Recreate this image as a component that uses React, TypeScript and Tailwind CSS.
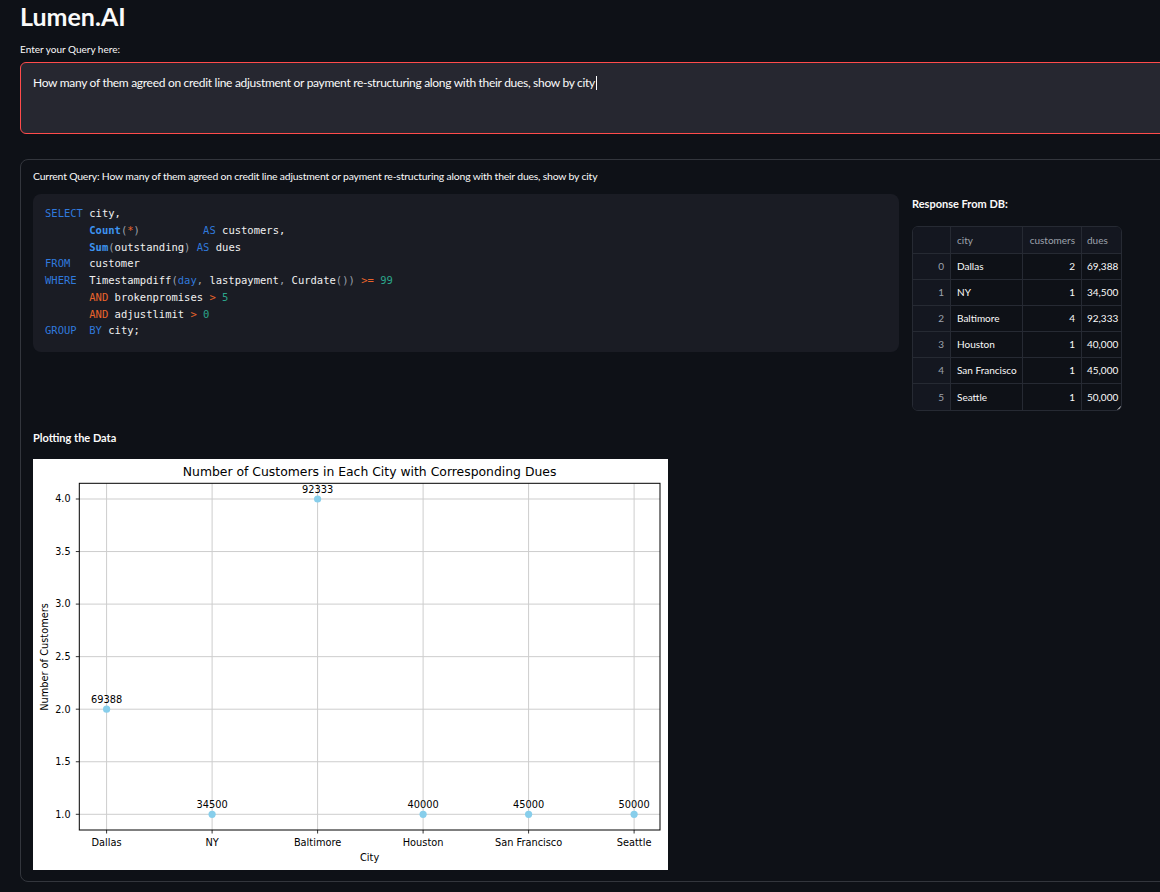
import type { ReactNode } from 'react';

const QUERY =
  'How many of them agreed on credit line adjustment or payment re-structuring along with their dues, show by city';

const ROWS = [
  { city: 'Dallas', customers: 2, dues: 69388 },
  { city: 'NY', customers: 1, dues: 34500 },
  { city: 'Baltimore', customers: 4, dues: 92333 },
  { city: 'Houston', customers: 1, dues: 40000 },
  { city: 'San Francisco', customers: 1, dues: 45000 },
  { city: 'Seattle', customers: 1, dues: 50000 },
];

const UI_FONT = { fontFamily: 'Lato, "Noto Sans", sans-serif' };
const MONO_FONT = { fontFamily: '"DejaVu Sans Mono", "Liberation Mono", monospace' };

// tiny token helpers for the sql block
const K = ({ children }: { children: ReactNode }) => <span className="text-[#3079dc]">{children}</span>;
const F = ({ children }: { children: ReactNode }) => (
  <span className="font-bold text-[#3d93f0]">{children}</span>
);
const O = ({ children }: { children: ReactNode }) => <span className="text-[#e8632b]">{children}</span>;
const N = ({ children }: { children: ReactNode }) => <span className="text-[#2ba58b]">{children}</span>;
const P = ({ children }: { children: ReactNode }) => <span className="text-[#9aa1ab]">{children}</span>;

function SqlBlock() {
  return (
    <pre
      className="rounded-lg bg-[#1a1c24] pl-3 pt-[11px] pb-[13px] text-[10.5px] leading-[16.75px] text-[#f0f0f0]"
      style={MONO_FONT}
    >
      <K>SELECT</K> city,{'\n'}
      {'       '}
      <F>Count</F>
      <P>(</P>
      <O>*</O>
      <P>)</P>
      {'          '}
      <K>AS</K> customers,{'\n'}
      {'       '}
      <F>Sum</F>
      <P>(</P>outstanding<P>)</P> <K>AS</K> dues{'\n'}
      <K>FROM</K>
      {'   '}customer{'\n'}
      <K>WHERE</K>
      {'  '}Timestampdiff<P>(</P>
      <K>day</K>
      <P>,</P> lastpayment<P>,</P> Curdate<P>())</P> <O>&gt;=</O> <N>99</N>
      {'\n'}
      {'       '}
      <O>AND</O> brokenpromises <O>&gt;</O> <N>5</N>
      {'\n'}
      {'       '}
      <O>AND</O> adjustlimit <O>&gt;</O> <N>0</N>
      {'\n'}
      <K>GROUP</K>
      {'  '}
      <K>BY</K> city;
    </pre>
  );
}

function ResultTable() {
  return (
    <div className="relative w-[210px] overflow-hidden rounded-md border border-[#262a33] text-[10px]">
      <div className="flex h-[27px] items-center border-b border-[#262a33] bg-[#141720] text-[#9ea3ad]">
        <div className="h-full w-[38px] border-r border-[#262a33]" />
        <div className="flex h-full w-[72px] items-center border-r border-[#262a33] pl-[6px]">city</div>
        <div className="flex h-full w-[59px] items-center justify-end border-r border-[#262a33] pr-[6px]">
          customers
        </div>
        <div className="flex h-full flex-1 items-center pl-[5px]">dues</div>
      </div>
      {ROWS.map((r, i) => (
        <div
          key={r.city}
          className={`flex h-[26px] items-center ${i < ROWS.length - 1 ? 'border-b border-[#262a33]' : ''}`}
        >
          <div className="flex h-full w-[38px] items-center justify-end border-r border-[#262a33] bg-[#141720] pr-[6px] text-[#9ea3ad]">
            {i}
          </div>
          <div className="flex h-full w-[72px] items-center border-r border-[#262a33] pl-[6px] text-[#fafafa]">
            {r.city}
          </div>
          <div className="flex h-full w-[59px] items-center justify-end border-r border-[#262a33] pr-[6px] text-[#fafafa]">
            {r.customers}
          </div>
          <div className="flex h-full flex-1 items-center whitespace-nowrap pl-[5px] text-[#fafafa]">
            {r.dues.toLocaleString('en-US')}
          </div>
        </div>
      ))}
      {/* resize grip */}
      <span className="absolute right-0 bottom-0 h-0 w-0 border-b-[4px] border-l-[4px] border-b-white border-l-transparent" />
    </div>
  );
}

// matplotlib-looking scatter, coordinates measured off the screenshot
const AX = { left: 46.3, top: 24.3, right: 627, bottom: 371 };
const xAt = (i: number) => 73.6 + i * 105.5;
const yAt = (v: number) => 355.3 - (v - 1) * 105.1;
const Y_TICKS = [4.0, 3.5, 3.0, 2.5, 2.0, 1.5, 1.0];

function Chart() {
  const font = 'DejaVu Sans, sans-serif';
  return (
    <svg width={635} height={411} viewBox="0 0 635 411" className="block bg-white">
      <rect x={0} y={0} width={635} height={411} fill="#ffffff" />
      {ROWS.map((_, i) => (
        <line key={`gx${i}`} x1={xAt(i)} x2={xAt(i)} y1={AX.top} y2={AX.bottom} stroke="#cdcdcd" strokeWidth={1} />
      ))}
      {Y_TICKS.map((v) => (
        <line key={`gy${v}`} x1={AX.left} x2={AX.right} y1={yAt(v)} y2={yAt(v)} stroke="#cdcdcd" strokeWidth={1} />
      ))}
      <rect
        x={AX.left}
        y={AX.top}
        width={AX.right - AX.left}
        height={AX.bottom - AX.top}
        fill="none"
        stroke="#000"
        strokeWidth={1}
      />
      {Y_TICKS.map((v) => (
        <g key={`ty${v}`}>
          <line x1={AX.left - 3.5} x2={AX.left} y1={yAt(v)} y2={yAt(v)} stroke="#000" strokeWidth={0.8} />
          <text x={37.5} y={yAt(v)} dy="0.35em" textAnchor="end" fontSize={9.6} fontFamily={font} fill="#000">
            {v.toFixed(1)}
          </text>
        </g>
      ))}
      {ROWS.map((r, i) => (
        <g key={`tx${r.city}`}>
          <line x1={xAt(i)} x2={xAt(i)} y1={AX.bottom} y2={AX.bottom + 3.5} stroke="#000" strokeWidth={0.8} />
          <text x={xAt(i)} y={386.8} textAnchor="middle" fontSize={9.8} fontFamily={font} fill="#000">
            {r.city}
          </text>
        </g>
      ))}
      {ROWS.map((r, i) => (
        <g key={`pt${r.city}`}>
          <circle cx={xAt(i)} cy={yAt(r.customers)} r={3.6} fill="#87ceeb" />
          <text
            x={xAt(i)}
            y={yAt(r.customers) - 6.5}
            textAnchor="middle"
            fontSize={9.8}
            fontFamily={font}
            fill="#000"
          >
            {r.dues}
          </text>
        </g>
      ))}
      <text x={336.6} y={16.5} textAnchor="middle" fontSize={12.4} fontFamily={font} fill="#000">
        Number of Customers in Each City with Corresponding Dues
      </text>
      <text x={336.6} y={401.8} textAnchor="middle" fontSize={9.8} fontFamily={font} fill="#000">
        City
      </text>
      <text
        x={14.5}
        y={198}
        transform="rotate(-90 14.5 198)"
        textAnchor="middle"
        fontSize={9.8}
        fontFamily={font}
        fill="#000"
      >
        Number of Customers
      </text>
    </svg>
  );
}

export default function App() {
  return (
    <div className="h-[892px] w-full overflow-hidden bg-[#0e1117] text-[#fafafa]" style={UI_FONT}>
      <div className="w-[1190px] pl-5">
        <h1 className="pt-[1px] text-[25px] font-bold leading-[30px]">Lumen.AI</h1>

        <div className="mt-[11px] text-[10px] leading-[14px]">Enter your Query here:</div>

        <div className="mt-[6px] h-[72px] rounded-md border border-[#ff4b4b] bg-[#262730] px-3 pt-[10px] text-[12px] leading-[18px] tracking-[-0.3px]">
          {QUERY}
          <span className="ml-[1px] inline-block h-[14px] w-[1px] translate-y-[3px] bg-white" />
        </div>

        <div className="mt-[25px] rounded-lg border border-[#33363d] px-[12px] pt-[9px] pb-[11px]">
          <div className="text-[10.4px] leading-[14px] tracking-[-0.18px]">Current Query: {QUERY}</div>

          <div className="mt-[11px] flex gap-[13px]">
            <div className="w-[866px] shrink-0">
              <SqlBlock />
            </div>
            <div className="pt-[3px]">
              <div className="text-[11px] font-bold leading-[14px]">Response From DB:</div>
              <div className="mt-[15px]">
                <ResultTable />
              </div>
            </div>
          </div>

          <div className="mt-[20px] text-[11px] font-bold leading-[14px]">Plotting the Data</div>
          <div className="mt-[14px]">
            <Chart />
          </div>
        </div>
      </div>
    </div>
  );
}
